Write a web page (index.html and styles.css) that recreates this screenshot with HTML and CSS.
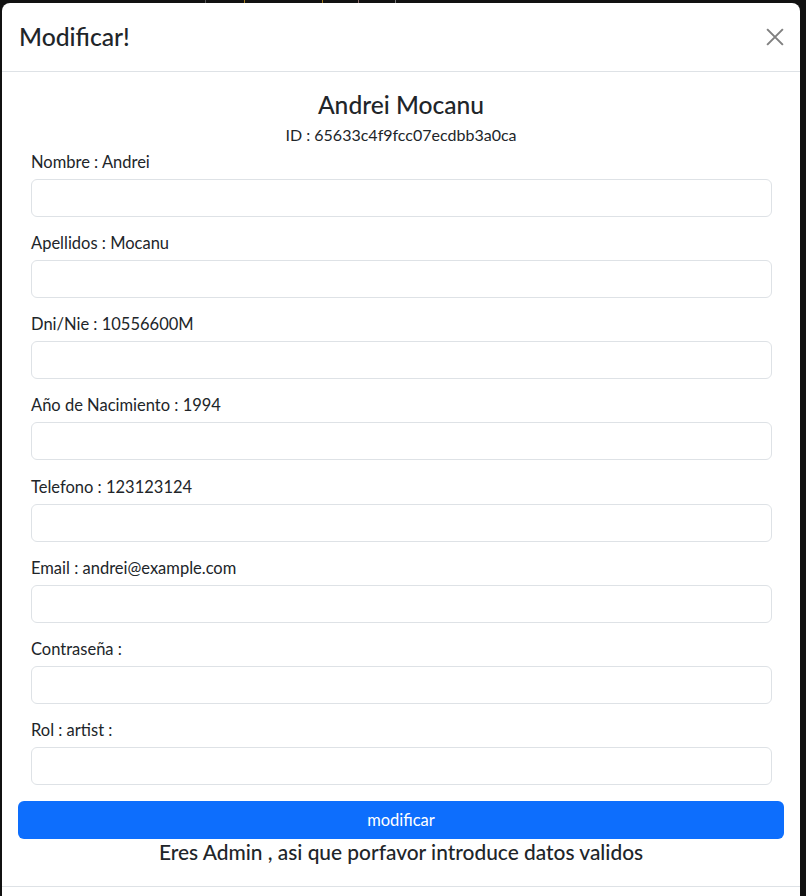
FILE: index.html
```html
<!DOCTYPE html>
<html lang="es">
<head>
<meta charset="utf-8">
<title>Modificar</title>
<link rel="stylesheet" href="styles.css">
</head>
<body>
<div class="backdrop-strip">
  <span class="tick t1"></span><span class="tick t2"></span><span class="tick t3"></span><span class="tick t4"></span><span class="tick t5"></span>
</div>
<div class="modal">
  <div class="modal-header">
    <h1 class="modal-title">Modificar!</h1>
    <button class="btn-close" aria-label="Close">
      <svg width="18" height="18" viewBox="0 0 16 16"><path d="M1 1L15 15M15 1L1 15" stroke="#808080" stroke-width="1.8" fill="none"/></svg>
    </button>
  </div>
  <div class="modal-body">
    <h4 class="user-name">Andrei Mocanu</h4>
    <p class="user-id">ID : 65633c4f9fcc07ecdbb3a0ca</p>
    <form class="form">
      <div class="field"><label>Nombre : Andrei</label><input type="text"></div>
      <div class="field"><label>Apellidos : Mocanu</label><input type="text"></div>
      <div class="field"><label>Dni/Nie : 10556600M</label><input type="text"></div>
      <div class="field"><label>Año de Nacimiento : 1994</label><input type="text"></div>
      <div class="field"><label>Telefono : 123123124</label><input type="text"></div>
      <div class="field"><label>Email : andrei@example.com</label><input type="text"></div>
      <div class="field"><label>Contraseña :</label><input type="password"></div>
      <div class="field"><label>Rol : artist :</label><input type="text"></div>
    </form>
    <button class="btn-primary">modificar</button>
    <p class="notice">Eres Admin , asi que porfavor introduce datos validos</p>
  </div>
  <div class="modal-footer"></div>
</div>
</body>
</html>
```

FILE: styles.css
```css
html, body {
  margin: 0;
  padding: 0;
  height: 100%;
  overflow: hidden;
}
body {
  background: #111111;
  font-family: Lato, "Noto Sans", sans-serif;
  color: #212529;
}
.backdrop-strip {
  height: 3px;
  position: relative;
}
.tick {
  position: absolute;
  top: 0;
  width: 1px;
  height: 3px;
}
.t1 { left: 205px; background: #555; }
.t2 { left: 244px; background: #a07a20; }
.t3 { left: 322px; background: #a07a20; }
.t4 { left: 358px; background: #8a6a6a; }
.t5 { left: 395px; background: #777; }
.modal {
  margin: 0 6px 0 2px;
  background: #ffffff;
  border-radius: 8px 8px 0 0;
  height: 900px;
}
.modal-header {
  display: flex;
  align-items: center;
  justify-content: space-between;
  height: 69px;
  box-sizing: border-box;
  padding: 0 13px 0 17px;
  border-bottom: 1px solid #dee2e6;
}
.modal-title {
  margin: 0;
  font-size: 24.7px;
  font-weight: 500;
  line-height: 1.2;
}
.btn-close {
  border: 0;
  background: transparent;
  padding: 0;
  width: 24px;
  height: 24px;
  display: flex;
  align-items: center;
  justify-content: center;
}
.modal-body {
  padding: 18px 16px 0 16px;
}
.user-name {
  margin: 0;
  text-align: center;
  font-size: 24.6px;
  font-weight: 500;
  line-height: 29px;
}
.user-id {
  margin: 4px 0 3px 0;
  text-align: center;
  font-size: 16px;
  line-height: 24px;
}
.form {
  display: flex;
  flex-direction: column;
  gap: 14.14px;
  padding: 0 12px 0 13px;
}
.field {
  display: flex;
  flex-direction: column;
  gap: 5px;
}
.field label {
  font-size: 16.5px;
  line-height: 24px;
}
.field input {
  height: 38px;
  box-sizing: border-box;
  border: 1px solid #dee2e6;
  border-radius: 6px;
  padding: 6px 12px;
  font-size: 16px;
  background: #fff;
}
.btn-primary {
  display: block;
  width: 100%;
  height: 38px;
  margin-top: 16px;
  border: 0;
  border-radius: 6px;
  background: #0d6efd;
  color: #ffffff;
  font-family: inherit;
  font-size: 16.5px;
}
.notice {
  margin: 0;
  text-align: center;
  font-size: 20.9px;
  font-weight: 500;
  line-height: 26px;
}
.modal-footer {
  margin-top: 21px;
  border-top: 1px solid #dee2e6;
}
```
